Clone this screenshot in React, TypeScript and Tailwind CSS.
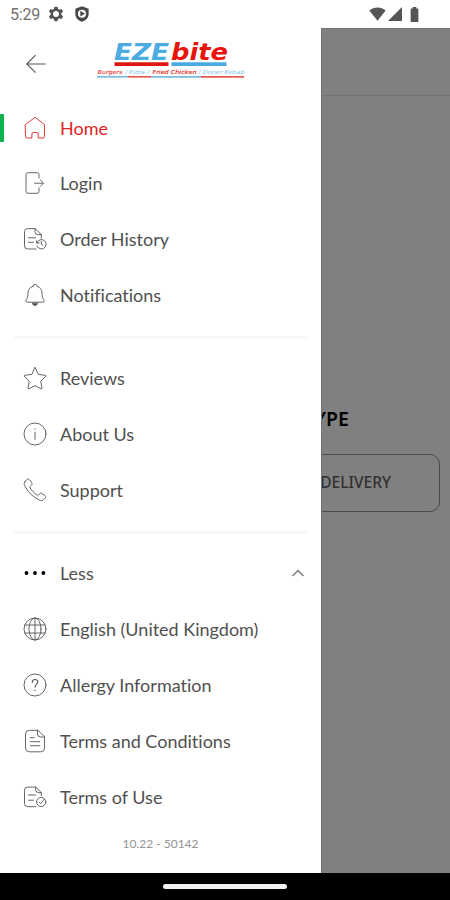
import type { ReactNode } from "react";

interface MenuItem {
  label: string;
  icon: ReactNode;
  active?: boolean;
  expanded?: boolean;
}

const Icon = ({ children }: { children: ReactNode }) => (
  <svg
    width="24"
    height="24"
    viewBox="0 0 24 24"
    fill="none"
    stroke="currentColor"
    strokeWidth="0.900"
    strokeLinecap="round"
    strokeLinejoin="round"
    className="shrink-0"
  >
    {children}
  </svg>
);

const mainItems: MenuItem[] = [
  {
    label: "Home",
    active: true,
    icon: (
      <Icon>
        <path d="M2.500 8.500 12 1.300l9.500 7.200v12a1.500 1.500 0 0 1-1.500 1.500h-4.700v-4a1.500 1.500 0 0 0-1.500-1.500h-3.400A1.500 1.500 0 0 0 8.900 18v4H4a1.500 1.500 0 0 1-1.500-1.500z" />
      </Icon>
    ),
  },
  {
    label: "Login",
    icon: (
      <Icon>
        <path d="M16 7V3.500a1.800 1.800 0 0 0-1.800-1.800H4.800A1.800 1.800 0 0 0 3 3.500v17a1.800 1.800 0 0 0 1.800 1.800h9.400a1.800 1.800 0 0 0 1.800-1.800V17" />
        <path d="M11.500 12.200H20M17.300 9l3.200 3.200-3.200 3.200" />
      </Icon>
    ),
  },
  {
    label: "Order History",
    icon: (
      <Icon>
        <path d="M13 22H4.700a3.200 3.200 0 0 1-3.200-3.200V4.800a3.200 3.200 0 0 1 3.200-3.200H12l6.300 6v3.600M12 1.600v3.200a2.800 2.800 0 0 0 2.800 2.800h3.500" />
        <path d="M5.500 10.800h7M5.500 15.300h5" />
        <path d="M14 15.500a4.700 4.700 0 1 1 0 3.500M13.500 13.800l.3 2.500 2.500-.4M18.300 14.500v2.800l1.700 1" />
      </Icon>
    ),
  },
  {
    label: "Notifications",
    icon: (
      <Icon>
        <path d="M10 3.300a2 2 0 1 1 4 0c3 .9 5 3.500 5 6.500 0 4 .5 5.300 1.900 7 .8 1 .2 2.400-1 2.400H4.100c-1.200 0-1.800-1.400-1-2.400 1.400-1.700 1.900-3 1.900-7 0-3 2-5.600 5-6.500z" />
        <path d="M9.500 20.500c.5 2.700 4.500 2.700 5 0z" fill="currentColor" />
      </Icon>
    ),
  },
];

const infoItems: MenuItem[] = [
  {
    label: "Reviews",
    icon: (
      <Icon>
        <path d="m12 1.500 3.300 6.800 7.200 1.100c.5.100.6.500.3.800l-5 5 1.200 7c.1.600-.4.900-.9.600L12 19.600l-6.100 3.200c-.5.300-1 0-.9-.6l1.200-7-5-5c-.300-.3-.2-.7.3-.8l7.200-1.100z" />
      </Icon>
    ),
  },
  {
    label: "About Us",
    icon: (
      <Icon>
        <circle cx="12" cy="12" r="11" />
        <path d="M12 10.300v7M12 6.800v.6" />
      </Icon>
    ),
  },
  {
    label: "Support",
    icon: (
      <Icon>
        <path d="M2.200 3.300 4 1.500c.8-.8 1.800-.8 2.500.1l2.200 3c.6.800.5 1.700-.2 2.400l-1.400 1.400c-.4.400-.4.900-.1 1.400 1.900 3 4.100 5.200 7.100 7.200.5.300 1 .3 1.400-.1l1.200-1.200c.7-.7 1.600-.8 2.400-.2l2.900 2.100c.9.700.9 1.700.1 2.500l-1.500 1.500c-1.200 1.200-2.900 1.100-4.700.3C9.700 18.900 4.500 13.700 1.600 7.600c-.7-1.500-.5-3.200.6-4.300z" />
      </Icon>
    ),
  },
];

const moreItems: MenuItem[] = [
  {
    label: "Less",
    expanded: true,
    icon: (
      <Icon>
        <g className="fill-black stroke-none">
          <circle cx="3.500" cy="12" r="1.900" />
          <circle cx="12" cy="12" r="1.900" />
          <circle cx="20.400" cy="12" r="1.900" />
        </g>
      </Icon>
    ),
  },
  {
    label: "English (United Kingdom)",
    icon: (
      <Icon>
        <circle cx="12" cy="12" r="11" />
        <ellipse cx="12" cy="12" rx="6" ry="11" />
        <path d="M12 1v22M2 8h20M2 16h20" />
      </Icon>
    ),
  },
  {
    label: "Allergy Information",
    icon: (
      <Icon>
        <circle cx="12" cy="12" r="11" />
        <path d="M9.300 9.300c0-3.700 5.500-3.700 5.500-.2 0 2.300-2.700 2.200-2.700 4.800M12 17v.5" strokeWidth="1.200" />
      </Icon>
    ),
  },
  {
    label: "Terms and Conditions",
    icon: (
      <Icon>
        <path d="M14.500 1.300H6.300A3.800 3.800 0 0 0 2.500 5v14a3.800 3.800 0 0 0 3.800 3.800h11.400a3.800 3.800 0 0 0 3.800-3.800V8zM14.500 1.300V5a3 3 0 0 0 3 3h4" />
        <path d="M7.300 8.700h4M7.300 12.700h9.500M7.300 16.700h9.500" />
      </Icon>
    ),
  },
  {
    label: "Terms of Use",
    icon: (
      <Icon>
        <path d="M13 21.700H4.700a3.200 3.200 0 0 1-3.200-3.200V5.300a3.200 3.200 0 0 1 3.200-3.200h8l5.600 5.500v3.200M12.700 2.100v2.700a2.800 2.800 0 0 0 2.800 2.800h2.800" />
        <path d="M5.500 10h7M5.500 15.200h5" />
        <circle cx="18.200" cy="17" r="4.600" />
        <path d="m16.100 17 1.600 1.600 3.600-4.300" />
      </Icon>
    ),
  },
];

const StatusBar = () => (
  <header className="flex h-7 shrink-0 items-center bg-white pl-[10px] pr-[31px]">
    <span className="w-[31px] pt-[2px] font-[Roboto,sans-serif] text-base leading-7 tracking-[-0.2px] text-[#707070]">
      5:29
    </span>
    <svg width="16" height="16" viewBox="0 0 24 24" className="ml-[7px]" fill="#505050">
      <path
        fillRule="evenodd"
        d="M9.700 1h4.600l.6 3.300 2.200 1.300 3.200-1.200 2.300 4L20 10.700v2.600l2.600 2.300-2.300 4-3.200-1.200-2.200 1.300-.6 3.300H9.700l-.6-3.300-2.200-1.300-3.200 1.200-2.300-4L4 13.300v-2.600L1.400 8.400l2.300-4 3.200 1.200 2.200-1.300zM12 7.500a4.500 4.500 0 1 0 0 9 4.500 4.500 0 0 0 0-9z"
      />
    </svg>
    <svg width="16" height="16" viewBox="0 0 24 24" className="ml-[10px]" fill="#484848">
      <path
        fillRule="evenodd"
        d="M12 .5 22 4v8c0 5.500-4 9.500-10 11.800C6 21.500 2 17.500 2 12V4zM12 5.500a6 6 0 1 0 0 12 6 6 0 0 0 0-12z"
      />
      <path d="m9.500 7.300 7 4.300-7 4.300z" />
    </svg>
    <div className="ml-auto flex items-center">
      <svg width="17" height="14" viewBox="0 0 17 14" fill="#555">
        <path d="M.3 3.600C5-.5 12-.5 16.700 3.600L8.500 13.700z" />
      </svg>
      <svg width="14" height="14" viewBox="0 0 14 14" className="ml-[2px]" fill="#555">
        <path d="M14 0v14H0z" />
      </svg>
      <svg width="9" height="15" viewBox="0 0 10 15" preserveAspectRatio="none" className="ml-[8px]" fill="#555">
        <path d="M3 0h4v1.500h1.500c.5 0 .8.300.8.800v11.900c0 .5-.3.800-.8.800h-7a.8.800 0 0 1-.8-.8V2.300c0-.5.300-.8.800-.8H3z" />
      </svg>
    </div>
  </header>
);

const Logo = () => (
  <svg width="150" height="42" viewBox="0 0 150 42" className="ml-[49px]">
    <g className="font-['DejaVu_Sans'] text-[23.500px] font-bold italic">
      <text x="17" y="22" textLength="55" lengthAdjust="spacingAndGlyphs" fill="#4babe2">EZE</text>
      <text x="74" y="22" textLength="57" lengthAdjust="spacingAndGlyphs" fill="#e8150c">bite</text>
    </g>
    <path d="M17.500 26.200h54" stroke="#df1710" strokeWidth="3.800" />
    <path d="M74.500 26.200h55" stroke="#4aabe2" strokeWidth="3.800" />
    <g className="font-['DejaVu_Sans'] text-[5.500px] italic" strokeWidth="0.150">
      <text x="0.500" y="35.700" textLength="25" lengthAdjust="spacingAndGlyphs" fill="#e84b44" stroke="#e84b44">Burgers</text>
      <text x="28" y="35.700" textLength="24" lengthAdjust="spacingAndGlyphs" fill="#7cbfe8">/ Pizza /</text>
      <text x="55.500" y="35.700" textLength="44" lengthAdjust="spacingAndGlyphs" fill="#e1251c" stroke="#e1251c">Fried Chicken</text>
      <text x="101.500" y="35.700" textLength="46" lengthAdjust="spacingAndGlyphs" fill="#7cbfe8">/ Doner Kebab</text>
    </g>
    <path d="M0 38.800h31" stroke="#79bde6" strokeWidth="1.700" />
    <path d="M31 38.800h23" stroke="#e65a54" strokeWidth="1.700" />
    <path d="M54 38.800h50" stroke="#79bde6" strokeWidth="1.700" />
    <path d="M104 38.800h43" stroke="#e65a54" strokeWidth="1.700" />
  </svg>
);

const MenuRow = ({ item }: { item: MenuItem }) => (
  <li className={`flex h-14 items-center pr-4 ${item.active ? "-mb-px text-[#e2231f]" : "text-[#555]"}`}>
    <span className={`mr-5 h-[28px] w-[4px] ${item.active ? "bg-[#0cb24c]" : ""}`} />
    <span className="-ml-[1.500px] flex">{item.icon}</span>
    <span
      className={`ml-[13.500px] text-lg leading-7 [font-variant-ligatures:none] ${item.active ? "" : "text-[#505050]"}`}
    >
      {item.label}
    </span>
    {item.expanded && (
      <svg width="14" height="14" viewBox="0 0 14 14" className="ml-auto" fill="none" stroke="#777" strokeWidth="1.300">
        <path d="M1.500 10 7 4.500l5.500 5.500" />
      </svg>
    )}
  </li>
);

const MenuGroup = ({ items }: { items: MenuItem[] }) => (
  <ul>
    {items.map((item) => (
      <MenuRow key={item.label} item={item} />
    ))}
  </ul>
);

const Divider = () => <div className="mx-[14px] mb-[11px] mt-[13px] h-[3px] bg-[#f8f8f8]" />;

const App = () => {
  return (
    <div className="flex h-[900px] w-[450px] flex-col overflow-hidden bg-white font-[Lato,sans-serif]">
      <StatusBar />

      <div className="flex h-[845px] shrink-0">
        {/* Drawer */}
        <nav className="flex w-[321px] shrink-0 flex-col">
          <div className="flex h-[72px] items-start pt-[10px]">
            <svg
              width="24"
              height="24"
              viewBox="0 0 24 24"
              className="ml-[24px] mt-[14px]"
              fill="none"
              stroke="#555"
              strokeWidth="1.100"
            >
              <path d="M21.700 12H3M11.500 3.200 2.800 12l8.700 8.700" />
            </svg>
            <Logo />
          </div>
          <MenuGroup items={mainItems} />
          <Divider />
          <MenuGroup items={infoItems} />
          <Divider />
          <MenuGroup items={moreItems} />
          <p className="mt-[9px] text-center text-xs leading-5 text-[#949494]">10.22 - 50142</p>
        </nav>

        {/* Dimmed order page behind the drawer */}
        <main className="flex flex-1 flex-col overflow-hidden border-l border-t border-[#747474] bg-[#808080] font-['Noto_Sans',sans-serif]">
          <div className="h-[67px] shrink-0 border-b border-[#727272]" />
          <div className="mr-[101px] mt-[309px] flex justify-end">
            <h2 className="text-[19.500px] font-semibold leading-7 text-black">TYPE</h2>
          </div>
          <div className="-ml-[30px] mr-[10px] mt-[21px] flex h-[58px] items-center justify-end rounded-[10px] border border-[#4a4a4a] pr-[48px] text-[15.500px] font-medium text-[#303030]">
            DELIVERY
          </div>
        </main>
      </div>

      {/* System navigation */}
      <footer className="flex h-[27px] shrink-0 justify-center bg-black pt-[11px]">
        <div className="h-[5px] w-[124px] rounded-full bg-[#f2f2f2]" />
      </footer>
    </div>
  );
};

export default App;
